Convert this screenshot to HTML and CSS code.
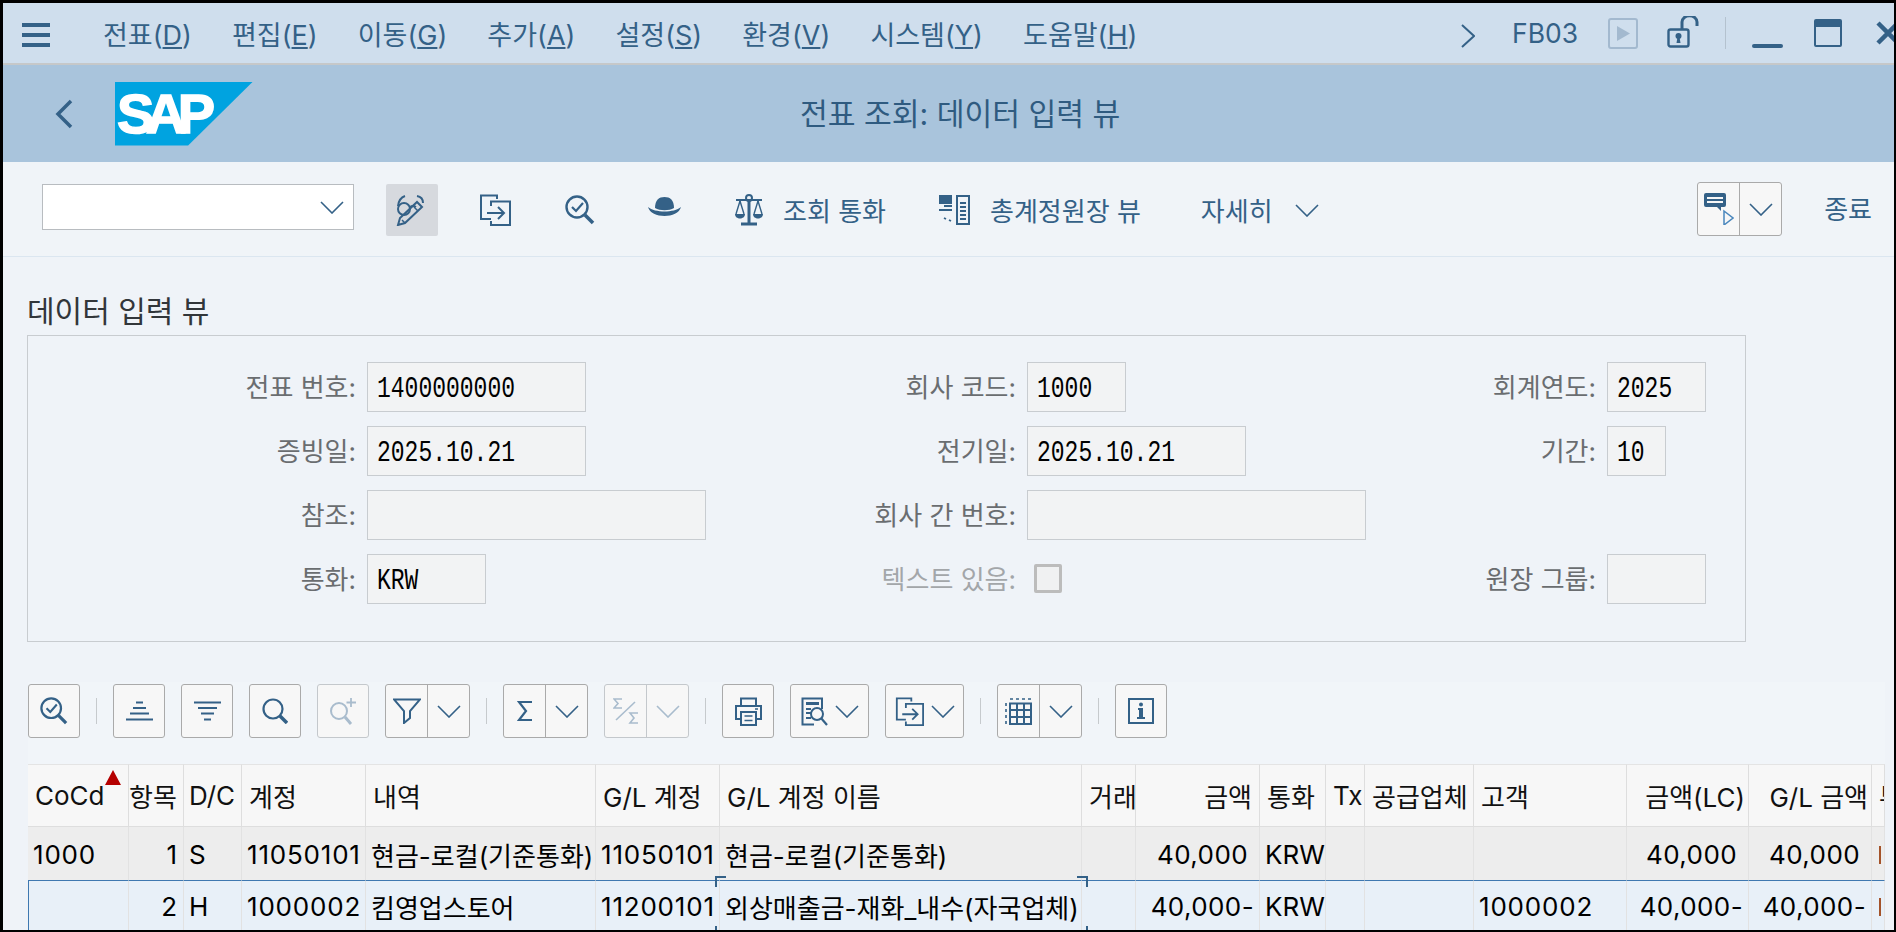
FILE: index.html
```html
<!DOCTYPE html>
<html lang="ko">
<head>
<meta charset="utf-8">
<title>전표 조회: 데이터 입력 뷰</title>
<link rel="stylesheet" href="styles.css">
</head>
<body>
<div class="frame">
  <header class="menubar">
    <svg class="ic burger" width="32" height="24" viewBox="0 0 32 24"><path d="M2 2H30M2 12H30M2 22H30" stroke-width="4"/></svg>
    <nav class="menu">
      <span>전표(<u>D</u>)</span><span>편집(<u>E</u>)</span><span>이동(<u>G</u>)</span><span>추가(<u>A</u>)</span><span>설정(<u>S</u>)</span><span>환경(<u>V</u>)</span><span>시스템(<u>Y</u>)</span><span>도움말(<u>H</u>)</span>
    </nav>
    <div class="sys">
      <svg class="ic s-chev" width="14" height="24" viewBox="0 0 14 24"><path d="M1 1L13 12L1 23" stroke-width="2"/></svg>
      <span class="tcode">FB03</span>
      <svg class="s-play" width="30" height="31" viewBox="0 0 30 31"><rect x="1" y="1" width="28" height="29" rx="2" fill="none" stroke="#a3b9cf" stroke-width="2"/><path d="M9 8L22 15.500L9 23Z" fill="#a3b9cf"/></svg>
      <svg class="ic s-lock" width="32" height="32" viewBox="0 0 32 32"><rect x="1.500" y="13.500" width="20" height="17" rx="2" stroke-width="2.400"/><path d="M15 13V6a6 5 0 0 1 15 0v4" stroke-width="3"/><circle class="fill" cx="11.500" cy="20" r="3"/><path class="fill" d="M9.500 27L10.500 21H12.500L13.500 27Z"/></svg>
      <i class="s-sep"></i>
      <i class="s-min"></i>
      <i class="s-max"></i>
      <svg class="ic s-x" width="24" height="24" viewBox="0 0 24 24"><path d="M2 2L22 22M22 2L2 22" stroke-width="4.500"/></svg>
    </div>
  </header>

  <div class="titlebar">
    <svg class="ic back" width="18" height="30" viewBox="0 0 18 30"><path d="M16 2L3 15L16 28" stroke-width="3.500"/></svg>
    <div class="logo"><span>SAP</span></div>
    <h1 class="title">전표 조회: 데이터 입력 뷰</h1>
  </div>

  <div class="toolbar">
    <div class="combo">
      <svg class="ic" width="24" height="13" viewBox="0 0 24 13"><path d="M1 1L12 12L23 1" stroke-width="1.600"/></svg>
    </div>
    <div class="tool active">
      <svg class="ic" width="32" height="32" viewBox="0 0 32 32"><circle cx="8" cy="15" r="6" stroke-width="2"/><path d="M2 12Q3 4 9 2M14 13Q17 11 20 13M21 2Q27 3 27 9" stroke-width="2"/><path d="M2 31L4 24L21 8L26 13L9 29Z" stroke-width="2"/><path d="M6 26L9 29M18 13L22 17" stroke-width="1.500"/></svg>
    </div>
    <div class="tool">
      <svg class="ic shift-l" width="32" height="32" viewBox="0 0 32 32"><path d="M18 5V1.500H2V25H12" stroke-width="2"/><path d="M12 12V7.500H31V31H12V27" stroke-width="2"/><path d="M8 19H25M19 13L25 19L19 25" stroke-width="2"/></svg>
    </div>
    <div class="tool">
      <svg class="ic" width="30" height="30" viewBox="0 0 30 30"><circle cx="12" cy="12" r="10.500" stroke-width="2.400"/><path d="M20 20L28 28" stroke-width="3.500"/><path d="M7 12L11 16L18 8" stroke-width="2.200"/></svg>
    </div>
    <div class="tool">
      <svg class="fillic hat" width="33" height="20" viewBox="0 0 33 20"><path d="M7 11C7 3 11 0 16.500 0S26 3 26 11C21 14 12 14 7 11Z"/><path d="M0 10C7 16 26 16 33 10C30 22 3 22 0 10Z"/></svg>
    </div>
    <div class="cmd c-scale">
      <svg class="ic" width="28" height="32" viewBox="0 0 28 32"><circle cx="14" cy="4" r="3" stroke-width="2"/><path d="M14 7V29M6 30H22" stroke-width="3"/><path d="M1 6H27" stroke-width="2"/><path d="M5 7L1 20M5 7L9 20M23 7L19 20M23 7L27 20" stroke-width="1.400"/><path class="fill" d="M0 20H10C10 26 0 26 0 20ZM18 20H28C28 26 18 26 18 20Z"/></svg>
      <span>조회 통화</span>
    </div>
    <div class="cmd c-ledger">
      <svg class="ic" width="31" height="30" viewBox="0 0 31 30"><rect class="fill" x="0" y="0" width="13" height="9"/><path d="M5 11H13M0 15H13M5 23L7 24M10 25L12 26" stroke-width="1.800"/><rect x="18" y="1" width="12" height="28" stroke-width="2"/><path d="M21 8H27M21 12H27M21 16H27M21 20H27M21 24H27" stroke-width="2"/></svg>
      <span>총계정원장 뷰</span>
    </div>
    <div class="cmd c-more">
      <span>자세히</span>
      <svg class="ic" width="24" height="13" viewBox="0 0 24 13"><path d="M1 1L12 12L23 1" stroke-width="1.600"/></svg>
    </div>
    <div class="tb-right">
      <div class="split">
        <div class="part">
          <svg class="ic" width="30" height="32" viewBox="0 0 30 32"><path class="fill" d="M2 0H20Q22 0 22 2V12Q22 14 20 14H17V18L13 14H2Q0 14 0 12V2Q0 0 2 0Z"/><path class="bub" d="M3 5H19M3 9H19" stroke-width="1.800"/><path class="tipline" d="M20 18L29 25L20 32Z" stroke-width="1.500"/></svg>
        </div>
        <div class="part">
          <svg class="ic" width="24" height="13" viewBox="0 0 24 13"><path d="M1 1L12 12L23 1" stroke-width="1.600"/></svg>
        </div>
      </div>
      <span class="exit">종료</span>
    </div>
  </div>

  <main class="content">
    <h2 class="heading">데이터 입력 뷰</h2>
    <section class="group">
      <label class="lbl">전표 번호:</label><div class="fld w218"><span class="mono">1400000000</span></div>
      <label class="lbl">회사 코드:</label><div class="fld w99"><span class="mono">1000</span></div>
      <label class="lbl">회계연도:</label><div class="fld w99"><span class="mono">2025</span></div>

      <label class="lbl">증빙일:</label><div class="fld w218"><span class="mono">2025.10.21</span></div>
      <label class="lbl">전기일:</label><div class="fld w218"><span class="mono">2025.10.21</span></div>
      <label class="lbl">기간:</label><div class="fld w59"><span class="mono">10</span></div>

      <label class="lbl">참조:</label><div class="fld w339"></div>
      <label class="lbl">회사 간 번호:</label><div class="fld w339"></div>
      <span></span><span></span>

      <label class="lbl">통화:</label><div class="fld w119"><span class="mono">KRW</span></div>
      <label class="lbl off">텍스트 있음:</label><div class="check"></div>
      <label class="lbl">원장 그룹:</label><div class="fld w99"></div>
    </section>

    <section class="grid">
      <div class="gridbar">
        <button class="btn"><svg class="ic" width="28" height="28" viewBox="0 0 30 30"><circle cx="12" cy="12" r="10.500" stroke-width="2.400"/><path d="M20 20L28 28" stroke-width="3.500"/><path d="M7 12L11 16L18 8" stroke-width="2.200"/></svg></button>
        <i class="vsep"></i>
        <button class="btn"><svg class="ic" width="27" height="20" viewBox="0 0 27 20"><path d="M10 1.500H17M7 7H20M4 12.500H23M0 18.500H27" stroke-width="2"/></svg></button>
        <button class="btn"><svg class="ic" width="27" height="20" viewBox="0 0 27 20"><path d="M0 1.500H27M4 7H23M7 12.500H20M10 18.500H17" stroke-width="2"/></svg></button>
        <button class="btn"><svg class="ic" width="26" height="26" viewBox="0 0 26 26"><circle cx="11" cy="11" r="9.500" stroke-width="2.200"/><path d="M18 18L25 25" stroke-width="3.500"/></svg></button>
        <button class="btn dis"><svg class="ic" width="28" height="28" viewBox="0 0 28 28"><circle cx="10" cy="14" r="8" stroke-width="2"/><path d="M16 20L22 27" stroke-width="3"/><path d="M22 1V10M17.500 5.500H27" stroke-width="1.800"/></svg></button>
        <div class="btn split2">
          <div class="p1"><svg class="ic" width="28" height="26" viewBox="0 0 28 26"><path d="M1 1.500H27L17 13V20L11 25V13Z" stroke-width="2"/></svg></div>
          <div class="p2"><svg class="ic" width="24" height="13" viewBox="0 0 24 13"><path d="M1 1L12 12L23 1" stroke-width="1.600"/></svg></div>
        </div>
        <i class="vsep"></i>
        <div class="btn split2">
          <div class="p1"><svg class="ic" width="16" height="22" viewBox="0 0 16 22"><path d="M15 2H2L9 11L2 20H15" stroke-width="2.200"/></svg></div>
          <div class="p2"><svg class="ic" width="24" height="13" viewBox="0 0 24 13"><path d="M1 1L12 12L23 1" stroke-width="1.600"/></svg></div>
        </div>
        <div class="btn split2 dis">
          <div class="p1"><svg class="ic" width="26" height="26" viewBox="0 0 26 26"><path d="M9 1H1L5 5.500L1 10H9M25 15H17L21 20L17 25H25" stroke-width="1.600"/><path d="M3 22L22 4" stroke-width="1.600"/></svg></div>
          <div class="p2"><svg class="ic" width="24" height="13" viewBox="0 0 24 13"><path d="M1 1L12 12L23 1" stroke-width="1.600"/></svg></div>
        </div>
        <i class="vsep"></i>
        <button class="btn"><svg class="ic" width="29" height="29" viewBox="0 0 29 29"><path d="M7 9V1.500H22V9" stroke-width="2"/><path d="M7 22H2V9H27V22H22" stroke-width="2"/><rect x="7" y="15" width="15" height="13" stroke-width="2"/><path d="M10.500 19H18.500M10.500 23.500H18.500M21 12H24" stroke-width="1.600"/></svg></button>
        <div class="btn wide">
          <svg class="ic" width="27" height="29" viewBox="0 0 27 29"><path d="M21 12V1.500H1.500V27.500H13" stroke-width="2"/><path class="fill" d="M5 5H18V8H5ZM5 11H10V13H5ZM5 15H10V17H5ZM5 20H10V22H5Z"/><circle cx="16" cy="17" r="6" stroke-width="2"/><path d="M20 21L26 28" stroke-width="2.200"/></svg>
          <svg class="ic" width="24" height="13" viewBox="0 0 24 13"><path d="M1 1L12 12L23 1" stroke-width="1.600"/></svg>
        </div>
        <div class="btn wide">
          <svg class="ic" width="29" height="29" viewBox="0 0 32 32"><path d="M18 5V1.500H2V25H12" stroke-width="2"/><path d="M12 12V7.500H31V31H12V27" stroke-width="2"/><path d="M8 19H25M19 13L25 19L19 25" stroke-width="2"/></svg>
          <svg class="ic" width="24" height="13" viewBox="0 0 24 13"><path d="M1 1L12 12L23 1" stroke-width="1.600"/></svg>
        </div>
        <i class="vsep"></i>
        <div class="btn split2">
          <div class="p1"><svg class="ic" width="27" height="27" viewBox="0 0 27 27"><path d="M5 1H8M11 1H14M17 1H20M23 1H26M1 5V8M1 11V14M1 17V20M1 23V26" stroke-width="1.600"/><path d="M5 5.500H26V26H5ZM5 12H26M5 19H26M12 5.500V26M19 5.500V26" stroke-width="2"/></svg></div>
          <div class="p2"><svg class="ic" width="24" height="13" viewBox="0 0 24 13"><path d="M1 1L12 12L23 1" stroke-width="1.600"/></svg></div>
        </div>
        <i class="vsep"></i>
        <button class="btn"><svg class="ic" width="26" height="26" viewBox="0 0 26 26"><rect x="1" y="1" width="24" height="24" stroke-width="2"/><circle class="fill" cx="13" cy="6.500" r="2"/><path class="fill" d="M10 10H15V19H17V21H9V19H11V12H10Z"/></svg></button>
      </div>

      <table class="tbl">
        <colgroup>
          <col class="k101"><col class="k55"><col class="k58"><col class="k124"><col class="k230"><col class="k124"><col class="k362"><col class="k54"><col class="k124"><col class="k66"><col class="k39"><col class="k109"><col class="k153"><col class="k122"><col class="k123"><col class="k13">
        </colgroup>
        <thead>
          <tr>
            <th class="sorted">CoCd<i class="tri"></i></th><th class="r h-item">항목</th><th class="h-dc">D/C</th><th>계정</th><th>내역</th><th>G/L 계정</th><th>G/L 계정 이름</th><th>거래</th><th class="r h-amt">금액</th><th>통화</th><th>Tx</th><th>공급업체</th><th>고객</th><th class="r h-end">금액(LC)</th><th class="r h-end">G/L 금액</th><th>부</th>
          </tr>
        </thead>
        <tbody>
          <tr class="row1">
            <td class="n">1000</td><td class="r">1</td><td>S</td><td class="n">11050101</td><td>현금-로컬(기준통화)</td><td class="n">11050101</td><td>현금-로컬(기준통화)</td><td></td><td class="r pos n">40,000</td><td>KRW</td><td></td><td></td><td></td><td class="r pos n">40,000</td><td class="r pos n">40,000</td><td><i class="tick"></i></td>
          </tr>
          <tr class="row2">
            <td></td><td class="r">2</td><td>H</td><td class="n">1000002</td><td>킴영업스토어</td><td class="n">11200101</td><td class="sel">외상매출금-재화_내수(자국업체)<i class="cn tl"></i><i class="cn tr"></i><i class="cn bl"></i><i class="cn br"></i></td><td></td><td class="r n">40,000-</td><td>KRW</td><td></td><td></td><td class="n">1000002</td><td class="r n">40,000-</td><td class="r n">40,000-</td><td><i class="tick"></i></td>
          </tr>
        </tbody>
      </table>
    </section>
  </main>
</div>
</body>
</html>
```
FILE: styles.css
```css
* { box-sizing: border-box; }
html, body { margin: 0; padding: 0; background: #000; }
body { width: 1896px; height: 932px; overflow: hidden; font-family: Inter, "Noto Sans CJK KR", "Noto Sans", sans-serif; }
.frame { width: 1896px; height: 932px; border: solid #000; border-width: 3px 2px 2px 3px; background: #eff3f8; overflow: hidden; display: flex; flex-direction: column; }
svg { display: block; flex-shrink: 0; }
.ic { fill: none; stroke: #346187; }
.ic .fill { fill: #346187; stroke: none; }
.ic .bub { stroke: #f7f7f7; }
.ic .tipline { stroke: #4a87bd; }
.fillic { fill: #346187; }
.dis .ic { stroke: #a9bccd; }
.dis .ic .fill { fill: #a9bccd; }

/* menu bar */
.menubar { height: 62px; flex-shrink: 0; background: #cfdeed; border-bottom: 2px solid #c6c8c9; display: flex; align-items: center; padding-left: 17px; color: #346187; font-size: 27px; }
.burger { margin-top: 4px; }
.menu { display: flex; gap: 40.100px; margin-left: 51px; }
.menu span { white-space: nowrap; }
.sys { margin-left: auto; display: flex; align-items: center; margin-right: -6px; }
.s-chev { margin-top: 6px; }
.tcode { margin-left: 37px; width: 66px; font-size: 26.500px; white-space: nowrap; }
.s-play { margin-left: 30px; }
.s-lock { margin-left: 29px; margin-top: -3px; }
.s-sep { width: 1px; height: 32px; background: #b4c2cf; margin-left: 26px; }
.s-min { width: 31px; height: 4px; background: #346187; border-radius: 2px; margin-left: 26px; margin-top: 26px; }
.s-max { width: 28px; height: 28px; border: 2px solid #346187; border-top-width: 8px; border-radius: 2px; margin-left: 31px; }
.s-x { margin-left: 34px; }

/* title bar */
.titlebar { height: 97px; flex-shrink: 0; background: #a9c4dc; display: flex; align-items: center; padding-left: 52px; }
.logo { width: 138px; height: 64px; margin-left: 42px; background: #00a3e0; clip-path: polygon(0 0, 100% 0, 53% 100%, 0 100%); color: #fff; font: bold 56px/64px "Liberation Sans", sans-serif; letter-spacing: -8.500px; -webkit-text-stroke: 1.500px #fff; padding-left: 2px; }
.title { margin: 0 0 3px 547px; font-size: 30.200px; font-weight: 400; color: #2f5b80; white-space: nowrap; }

/* main toolbar */
.toolbar { height: 95px; flex-shrink: 0; border-bottom: 1px solid #dbe6f0; background: #f0f4f8; display: flex; align-items: flex-start; padding: 22px 0 0 39px; color: #346187; font-size: 26px; }
.combo { width: 312px; height: 46px; background: #fff; border: 1px solid #b8bcc0; display: flex; align-items: center; justify-content: flex-end; padding-right: 9px; margin-right: 32px; }
.tool { width: 52px; height: 52px; margin-right: 32px; border-radius: 2px; display: flex; align-items: center; justify-content: center; }
.tool.active { background: #d6d9de; }
.shift-l { margin-right: 2px; }
.hat { margin-bottom: 6px; }
.cmd { height: 50px; display: flex; align-items: center; white-space: nowrap; }
.cmd svg { margin-top: 2px; }
.c-scale { margin-left: 13px; }
.c-scale span { margin-left: 20px; }
.c-ledger { margin-left: 53px; }
.c-ledger span { margin-left: 20px; }
.c-more { margin-left: 60px; }
.c-more svg { margin-left: 22px; }
.tb-right { margin-left: auto; display: flex; align-items: flex-start; }
.split { width: 85px; height: 54px; margin-top: -2px; background: #f7f7f7; border: 1px solid #aaa; border-radius: 3px; display: flex; }
.part { flex: 1; display: flex; align-items: center; justify-content: center; }
.part + .part { border-left: 1px solid #aaa; }
.exit { margin: 0 22px 0 42px; line-height: 52px; }

/* content */
.content { flex: 1; padding-left: 24px; min-height: 0; }
.heading { margin: 0; padding-top: 33px; height: 78px; font-size: 30px; line-height: 42px; font-weight: 400; color: #32363a; }
.group { width: 1719px; height: 307px; border: 1px solid #c8ccd0; padding-top: 26px; display: grid; grid-template-columns: 339px 339px 321px 339px 241px 99px; grid-auto-rows: 50px; row-gap: 14px; }
.lbl { font-size: 26px; line-height: 52px; color: #6a6d70; text-align: right; padding-right: 11px; white-space: nowrap; }
.lbl.off { color: #a3a6a9; }
.fld { height: 50px; background: #f2f3f4; border: 1px solid #c8ccd0; padding-left: 9px; line-height: 48px; }
.w59 { width: 59px; } .w99 { width: 99px; } .w119 { width: 119px; } .w218 { width: 219px; } .w339 { width: 339px; }
.mono { display: inline-block; font: 23px/52px "Liberation Mono", monospace; color: #000; transform: scaleY(1.25); }
.check { width: 28px; height: 29px; margin: 10px 0 0 7px; background: #f0f1f2; border: 3px solid #bcbcbc; border-radius: 2px; }

/* grid */
.grid { width: 1857px; margin: 40px 0 0 1px; background: #f1f5f9; padding-top: 2px; }
.gridbar { height: 80px; display: flex; align-items: flex-start; }
.btn { width: 52px; height: 54px; padding: 0; margin: 0 16px 0 0; background: #f7f7f7; border: 1px solid #aaa; border-radius: 3px; display: flex; align-items: center; justify-content: center; flex-shrink: 0; }
.btn.dis { border-color: #c4c8cc; }
.split2 { width: 85px; align-items: stretch; justify-content: flex-start; }
.p1 { width: 41px; display: flex; align-items: center; justify-content: center; }
.p2 { flex: 1; border-left: 1px solid #aaa; display: flex; align-items: center; justify-content: center; }
.dis .p2 { border-color: #c4c8cc; }
.wide { width: 79px; gap: 7px; margin-right: 16px; }
.vsep { width: 1px; height: 26px; background: #c6cacd; margin: 14px 16px 0 0; }

.tbl { border-collapse: separate; border-spacing: 0; table-layout: fixed; width: 1857px; font-size: 26px; color: #000; }
.k101 { width: 101px; } .k55 { width: 55px; } .k58 { width: 58px; } .k124 { width: 124px; } .k230 { width: 230px; } .k362 { width: 362px; } .k54 { width: 54px; } .k66 { width: 66px; } .k39 { width: 39px; } .k109 { width: 109px; } .k153 { width: 153px; } .k122 { width: 122px; } .k123 { width: 123px; } .k13 { width: 13px; }
.tbl th, .tbl td { white-space: nowrap; overflow: hidden; padding: 0 5px; font-weight: 400; text-align: left; border-right: 1px solid #e2e2e2; }
.tbl th { height: 63px; background: #f7f7f7; padding: 0 7px; border-top: 1px solid #e4e4e4; border-right-color: #dedede; border-bottom: 1px solid #dedede; color: #111; }
.tbl th.r, .tbl td.r { text-align: right; padding-right: 6px; }
.tbl th.h-item { padding-right: 9px; padding-left: 0; }
.tbl th.h-dc { padding-left: 5px; }
.tbl th.h-amt { padding-right: 7px; }
.tbl th.h-end { padding-right: 3px; padding-left: 0; }
.tbl td.n { letter-spacing: 0.800px; }
.tbl td.r.n { letter-spacing: 0.400px; padding-right: 5px; }
.tbl td.r.pos { padding-right: 11px; }
.row1 td { height: 53px; background: #ededed; padding-top: 2px; }
.row2 td { height: 54px; background: #e8f0f8; border-top: 1px solid #3f78b0; padding-bottom: 2px; }
.row2 td:first-child { border-left: 1px solid #3f78b0; }
.sorted { position: relative; overflow: visible !important; }
.tri { position: absolute; left: 77px; top: 5px; width: 0; height: 0; border: solid transparent; border-width: 0 8px 15px; border-bottom-color: #b50000; }
.tick { display: block; width: 2px; height: 18px; margin-left: 2px; background: #a4532a; }
.tbl td.sel { position: relative; overflow: visible; }
.cn { position: absolute; width: 11px; height: 11px; border: solid #346187; border-width: 0; }
.tl { left: -5px; top: -5px; border-top-width: 2px; border-left-width: 2px; }
.tr { right: -7px; top: -5px; border-top-width: 2px; border-right-width: 2px; }
.bl { left: -5px; top: 45px; border-left-width: 2px; }
.br { right: -7px; top: 45px; border-right-width: 2px; }
```
